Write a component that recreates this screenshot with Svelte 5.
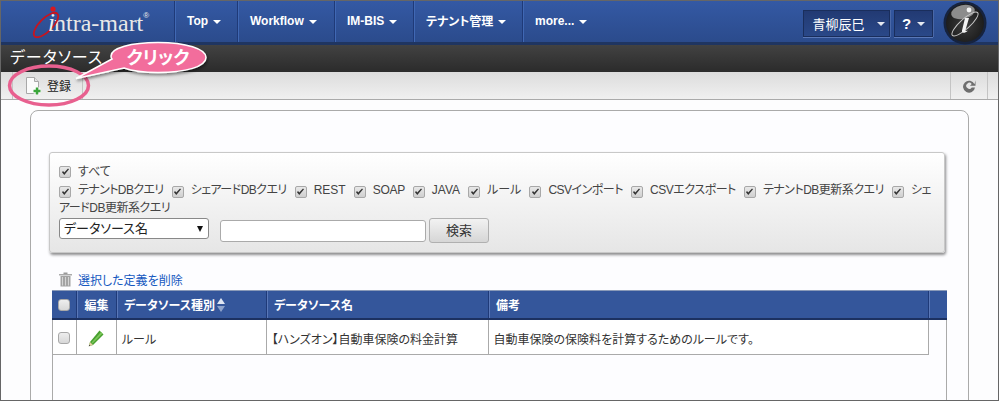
<script>
  const menus = [
    { label: "Top", width: 63 },
    { label: "Workflow", width: 97 },
    { label: "IM-BIS", width: 79 },
    { label: "テナント管理", width: 109 },
    { label: "more...", width: 81 },
  ];

  // spacing squeezes the katakana to the narrow widths of the original font
  const types = [
    { label: "テナントDBクエリ", spacing: -0.6 },
    { label: "シェアードDBクエリ", spacing: -0.55 },
    { label: "REST", spacing: 0 },
    { label: "SOAP", spacing: -0.3 },
    { label: "JAVA", spacing: 0 },
    { label: "ルール", spacing: 0 },
    { label: "CSVインポート", spacing: -0.5 },
    { label: "CSVエクスポート", spacing: -0.45 },
    { label: "テナントDB更新系クエリ", spacing: -0.5 },
    { label: "シェアードDB更新系クエリ", spacing: -0.5 },
  ];
</script>

{#snippet checkbox(checked)}
  <span class="check">
    {#if checked}
      <svg width="9" height="8" viewBox="0 0 9 8"><path d="M1 4.2 3.3 7 8 1.2 7 .6 3.3 4.4 2 3z" fill="#333" /></svg>
    {/if}
  </span>
{/snippet}

<div class="frame">
  <header class="topbar">
    <div class="logo">
      <svg class="logo-mark" width="34" height="34" viewBox="0 0 34 34">
        <ellipse cx="17" cy="21" rx="16" ry="6.500" transform="rotate(-45 17 21)" fill="none" stroke="#c8141e" stroke-width="1.800" />
        <circle cx="24" cy="5" r="2.600" fill="#d81820" />
      </svg>
      <span class="logo-i">i</span><span class="logo-text">ntra-mart</span><sup>®</sup>
    </div>
    <nav class="menu">
      {#each menus as m}
        <div class="menu-item" style="width: {m.width}px">
          <span>{m.label}</span><i class="caret"></i>
        </div>
      {/each}
    </nav>
    <div class="user-tools">
      <div class="tool user"><span>青柳辰巳</span><i class="caret"></i></div>
      <div class="tool help"><b>?</b><i class="caret"></i></div>
      <div class="ball">
        <svg width="44" height="44" viewBox="0 0 44 44">
          <defs>
            <radialGradient id="ballFill" cx="50%" cy="55%" r="55%">
              <stop offset="0" stop-color="#3c3c3c" />
              <stop offset="1" stop-color="#1a1a1a" />
            </radialGradient>
          </defs>
          <circle cx="22" cy="22" r="21.5" fill="#16233f" />
          <circle cx="22" cy="22" r="19" fill="url(#ballFill)" />
          <ellipse cx="20" cy="11" rx="12" ry="7" transform="rotate(-12 20 11)" fill="#8c8c8c" />
          <ellipse cx="22" cy="23" rx="17" ry="5" transform="rotate(-42 22 23)" fill="none" stroke="#c8c8c8" stroke-width="1" />
          <path d="M22 17h4l-3.500 12c-.4 1.400.4 1.400 1.600.4l.4.6c-2 2-6 3-5.500-.4z" fill="#f4f4f4" />
          <circle cx="26" cy="9" r="2.400" fill="#f4f4f4" />
        </svg>
      </div>
    </div>
  </header>

  <div class="titlebar">データソース</div>

  <div class="toolbar">
    <div class="tb-btn">
      <svg width="16" height="18" viewBox="0 0 16 18">
        <path d="M1.500.5h8l4 4v12h-12z" fill="#fbfbfb" stroke="#a8a8a8" />
        <path d="M9.500.5v4h4" fill="#e4e4e4" stroke="#a8a8a8" />
        <circle cx="12" cy="14" r="4" fill="#fff" opacity=".7" />
        <path d="M10.800 10.500h2.400v2.300h2.300v2.400h-2.300v2.300h-2.400v-2.300H8.500v-2.400h2.300z" fill="#3aa63a" />
      </svg>
      <span>登録</span>
    </div>
    <div class="tb-reload">
      <svg width="14" height="14" viewBox="0 0 14 14">
        <path d="M12.500 5.200A6 6 0 1 0 13 8.500H9.800A3 3 0 1 1 9.700 5L8 6.700h5.500V1.200z" fill="#6e6e6e" />
      </svg>
    </div>
  </div>

  <main class="content">
    <section class="card">
      <div class="search">
        <div class="all-row">
          <label class="opt">{@render checkbox(true)}すべて</label>
        </div>
        <div class="types">
          {#each types as t}
            <span class="opt-inline">{@render checkbox(true)}<span class="opt-text" style="letter-spacing: {t.spacing}px">{t.label}</span></span>
          {/each}
        </div>
        <div class="search-row">
          <div class="select">データソース名<i></i></div>
          <div class="input"></div>
          <div class="button">検索</div>
        </div>
      </div>

      <div class="delete-link">
        <svg width="13" height="15" viewBox="0 0 13 15">
          <path d="M0 2h13v1.500H0z" fill="#aaa" />
          <path d="M4.500 .5h4V2h-4z" fill="#999" />
          <path d="M1.500 4h10v10.500h-10z" fill="#a3a3a3" />
          <path d="M3.500 5v8.500M6.500 5v8.500M9.500 5v8.500" stroke="#d4d4d4" />
        </svg>
        <span>選択した定義を削除</span>
      </div>

      <div class="table">
        <div class="thead">
          <div class="th c-check"><span class="check blank"></span></div>
          <div class="th c-edit center">編集</div>
          <div class="th c-type">データソース種別
            <svg class="sort" width="8" height="14" viewBox="0 0 8 14">
              <path d="M4 0l4 6H0z" fill="#dfe6f3" />
              <path d="M4 14l4-6H0z" fill="#8ea3cc" />
            </svg>
          </div>
          <div class="th c-name">データソース名</div>
          <div class="th c-note">備考</div>
          <div class="th c-rest"></div>
        </div>
        <div class="tr">
          <div class="td c-check first"><span class="check blank"></span></div>
          <div class="td c-edit center">
            <svg width="16" height="17" viewBox="0 0 16 17">
              <path d="M11.500 .5 15.500 4.500 5 15 .8 16.200 2 12z" fill="#48a02f" />
              <path d="M13 2l1.500 1.500L4.500 13.500 3.500 12.500z" fill="#7cc65a" />
              <path d="M2 12l3 3-4.200 1.200z" fill="#e6cfa4" />
              <path d="M1.300 14.700l1 1-1.500.5z" fill="#333" />
            </svg>
          </div>
          <div class="td c-type">ルール</div>
          <div class="td c-name">【ハンズオン】自動車保険の料金計算</div>
          <div class="td c-note">自動車保険の保険料を計算するためのルールです。</div>
        </div>
      </div>
    </section>
  </main>

  <svg class="callout" width="215" height="112" viewBox="0 0 215 112">
    <defs>
      <filter id="soft" x="-10%" y="-20%" width="125%" height="150%">
        <feDropShadow dx="1" dy="2" stdDeviation="1.500" flood-color="#000" flood-opacity=".45" />
      </filter>
    </defs>
    <ellipse cx="49" cy="85.500" rx="39.500" ry="19.500" fill="none" stroke="#e8608f" stroke-width="3.500" />
    <path d="M158 42.500c28 0 48 6.500 48 15 0 9-20 15-48 15-14 0-26-1.500-34-4.500L76 78.500l36-19.500c-1-1-1-2-1-3 0-8 20-13.500 47-13.500z" fill="#f26d9c" stroke="#fff" stroke-width="1.500" filter="url(#soft)" />
    <text x="158" y="64" text-anchor="middle">クリック</text>
  </svg>
</div>

<style>
  :global(body) {
    margin: 0;
    background: #fff;
  }

  .frame {
    position: relative;
    box-sizing: border-box;
    width: 999px;
    height: 401px;
    overflow: hidden;
    border: 1px solid #666;
    border-bottom-width: 1px;
    font-family: "Liberation Sans", "Noto Sans CJK JP", sans-serif;
    font-size: 12px;
    font-feature-settings: "palt";
    color: #333;
    background: #fdfdfe;
  }

  .topbar {
    display: flex;
    height: 44px;
    box-sizing: border-box;
    background: linear-gradient(#3459a4, #2b4b8c);
    border-bottom: 3px solid #1f3561;
  }

  .logo {
    position: relative;
    display: flex;
    align-items: center;
    width: 173px;
    padding-left: 47px;
    box-sizing: border-box;
    color: #eee;
  }

  .logo-mark {
    position: absolute;
    left: 28px;
    top: 3px;
  }

  .logo-i {
    position: relative;
    font-family: "Liberation Serif", serif;
    font-style: italic;
    font-size: 25px;
    margin-top: 3px;
    width: 6px;
    color: #f0f0f0;
  }

  .logo-text {
    font-family: "Liberation Serif", serif;
    font-size: 24px;
    margin-top: 3px;
    color: #e8e8e8;
  }

  .logo sup {
    font-size: 8px;
    align-self: flex-start;
    margin-top: 11px;
    line-height: 1;
  }

  .menu {
    display: flex;
  }

  .menu-item {
    display: flex;
    align-items: center;
    gap: 5px;
    box-sizing: border-box;
    height: 41px;
    padding: 0 0 2px 12px;
    border-left: 1px solid #1f3a78;
    box-shadow: inset 1px 0 0 #4068b4;
    color: #fff;
    font-weight: bold;
    font-size: 12px;
  }

  .caret {
    display: inline-block;
    width: 0;
    height: 0;
    border-left: 4px solid transparent;
    border-right: 4px solid transparent;
    border-top: 4px solid #fff;
    margin-top: 3px;
  }

  .user-tools {
    display: flex;
    align-items: flex-start;
    margin-left: auto;
    gap: 4px;
    padding-top: 9px;
    padding-right: 11px;
  }

  .tool {
    display: flex;
    align-items: center;
    justify-content: center;
    box-sizing: border-box;
    height: 27px;
    background: linear-gradient(#223a73, #2a4888);
    border: 1px solid #1a2e5c;
    box-shadow: 0 1px 0 #5a78b8, 1px 0 0 #4a68a8;
    color: #fff;
  }

  .user {
    width: 87px;
    gap: 12px;
    padding-left: 4px;
    font-size: 13px;
  }

  .user .caret,
  .help .caret {
    border-top-color: #e4e8f0;
    margin-top: 1px;
  }

  .help {
    width: 39px;
    gap: 6px;
    font-size: 15px;
  }

  .ball {
    width: 44px;
    height: 44px;
    margin: -9px 0 0 6px;
  }

  .titlebar {
    box-sizing: border-box;
    height: 27px;
    padding: 2px 0 0 9px;
    background: linear-gradient(#424242, #2b2b2b);
    color: #fff;
    font-size: 16px;
    letter-spacing: 1px;
    line-height: 22px;
  }

  .toolbar {
    display: flex;
    justify-content: space-between;
    box-sizing: border-box;
    height: 28px;
    background: linear-gradient(#dcdcdc, #f0f0f0);
    border-bottom: 1px solid #aaa;
  }

  .tb-btn {
    display: flex;
    align-items: center;
    gap: 6px;
    box-sizing: border-box;
    margin-left: 11px;
    width: 71px;
    padding-left: 12px;
    border-left: 1px solid #c4c4c4;
    border-right: 1px solid #c4c4c4;
    color: #222;
    font-size: 12px;
  }

  .tb-reload {
    display: flex;
    align-items: center;
    justify-content: center;
    width: 38px;
    margin-right: 10px;
    box-sizing: border-box;
    border-left: 1px solid #c4c4c4;
    border-right: 1px solid #c4c4c4;
  }

  .content {
    padding: 10px 28px 0 29px;
  }

  .card {
    box-sizing: border-box;
    width: 939px;
    height: 320px;
    padding: 41px 22px 0 18px;
    background: #fdfdff;
    border: 1px solid #aaa;
    border-radius: 8px;
  }

  .search {
    box-sizing: border-box;
    width: 896px;
    height: 101px;
    padding: 10px 10px 0 9px;
    background: linear-gradient(#fff, #e6e6e6);
    border: 1px solid #c8c8c8;
    border-radius: 3px;
    box-shadow: 1px 2px 3px rgba(0, 0, 0, 0.45);
    line-height: 18px;
    color: #444;
  }

  .opt {
    display: flex;
    align-items: center;
    height: 18px;
  }

  .check {
    display: inline-flex;
    align-items: center;
    justify-content: center;
    box-sizing: border-box;
    flex: none;
    width: 12px;
    height: 12px;
    margin-right: 7px;
    background: linear-gradient(#e8e8e8, #cfcfcf);
    border: 1px solid #a8a8a8;
    border-radius: 2px;
    vertical-align: -2px;
  }

  .check.blank {
    margin: 0;
    background: linear-gradient(#eee, #d8d8d8);
    border-radius: 3px;
  }

  .opt-inline {
    margin-right: 8px;
  }

  .opt-text {
    word-break: break-all;
  }

  .search-row {
    display: flex;
    align-items: flex-start;
    margin-top: 1px;
  }

  .select {
    display: flex;
    align-items: center;
    justify-content: space-between;
    box-sizing: border-box;
    width: 150px;
    height: 21px;
    padding: 0 5px 0 4px;
    background: #fff;
    border: 1px solid #888;
    border-radius: 3px;
    font-size: 13px;
    color: #222;
  }

  .select i {
    width: 0;
    height: 0;
    border-left: 3px solid transparent;
    border-right: 3px solid transparent;
    border-top: 6px solid #111;
  }

  .input {
    box-sizing: border-box;
    width: 206px;
    height: 22px;
    margin: 2px 3px 0 11px;
    background: #fff;
    border: 1px solid #aaa;
    border-radius: 3px;
  }

  .button {
    box-sizing: border-box;
    width: 60px;
    height: 25px;
    line-height: 23px;
    text-align: center;
    background: linear-gradient(#f2f2f2, #d6d6d6);
    border: 1px solid #b0b0b0;
    border-radius: 3px;
    font-size: 13px;
    color: #333;
  }

  .delete-link {
    display: flex;
    align-items: center;
    gap: 6px;
    height: 17px;
    margin: 18px 0 2px 10px;
    color: #1558c0;
  }

  .table {
    box-sizing: border-box;
    width: 895px;
    height: 120px;
    margin-left: 3px;
    border-left: 1px solid #aaa;
    border-right: 1px solid #aaa;
  }

  .thead,
  .tr {
    display: flex;
  }

  .thead {
    box-sizing: border-box;
    height: 30px;
    margin-left: -1px;
    margin-right: -1px;
    background: #34569b;
    border-top: 1px solid #8a9ab8;
    border-bottom: 2px solid #1c3161;
    color: #fff;
    font-weight: bold;
  }

  .th {
    display: flex;
    align-items: center;
    box-sizing: border-box;
    padding-left: 7px;
    border-right: 1px solid #1f3a78;
    box-shadow: 1px 0 0 #5a78b8;
  }

  .th .sort {
    margin-left: 2px;
  }

  .tr {
    box-sizing: border-box;
    width: 876px;
    height: 35px;
    border-bottom: 1px solid #aaa;
    border-right: 1px solid #aaa;
    background: #fff;
    color: #333;
  }

  .td {
    display: flex;
    align-items: center;
    box-sizing: border-box;
    padding: 2px 0 0 5px;
    border-right: 1px solid #aaa;
  }

  .td:last-child {
    border-right: none;
  }

  .center {
    justify-content: center;
    padding-left: 0;
  }

  .c-check {
    width: 25px;
    justify-content: center;
    padding-left: 0;
  }

  .td.first {
    width: 24px;
  }

  .c-edit {
    width: 40px;
  }

  .c-type {
    width: 150px;
  }

  .c-name {
    width: 222px;
  }

  .c-note {
    width: 440px;
  }

  .th.c-rest {
    flex: 1;
    border-right: none;
    box-shadow: none;
  }

  .callout {
    position: absolute;
    left: -1px;
    top: -1px;
    pointer-events: none;
  }

  .callout text {
    font-family: "Noto Sans CJK JP", sans-serif;
    font-size: 18px;
    font-weight: bold;
    fill: #fff;
  }
</style>
